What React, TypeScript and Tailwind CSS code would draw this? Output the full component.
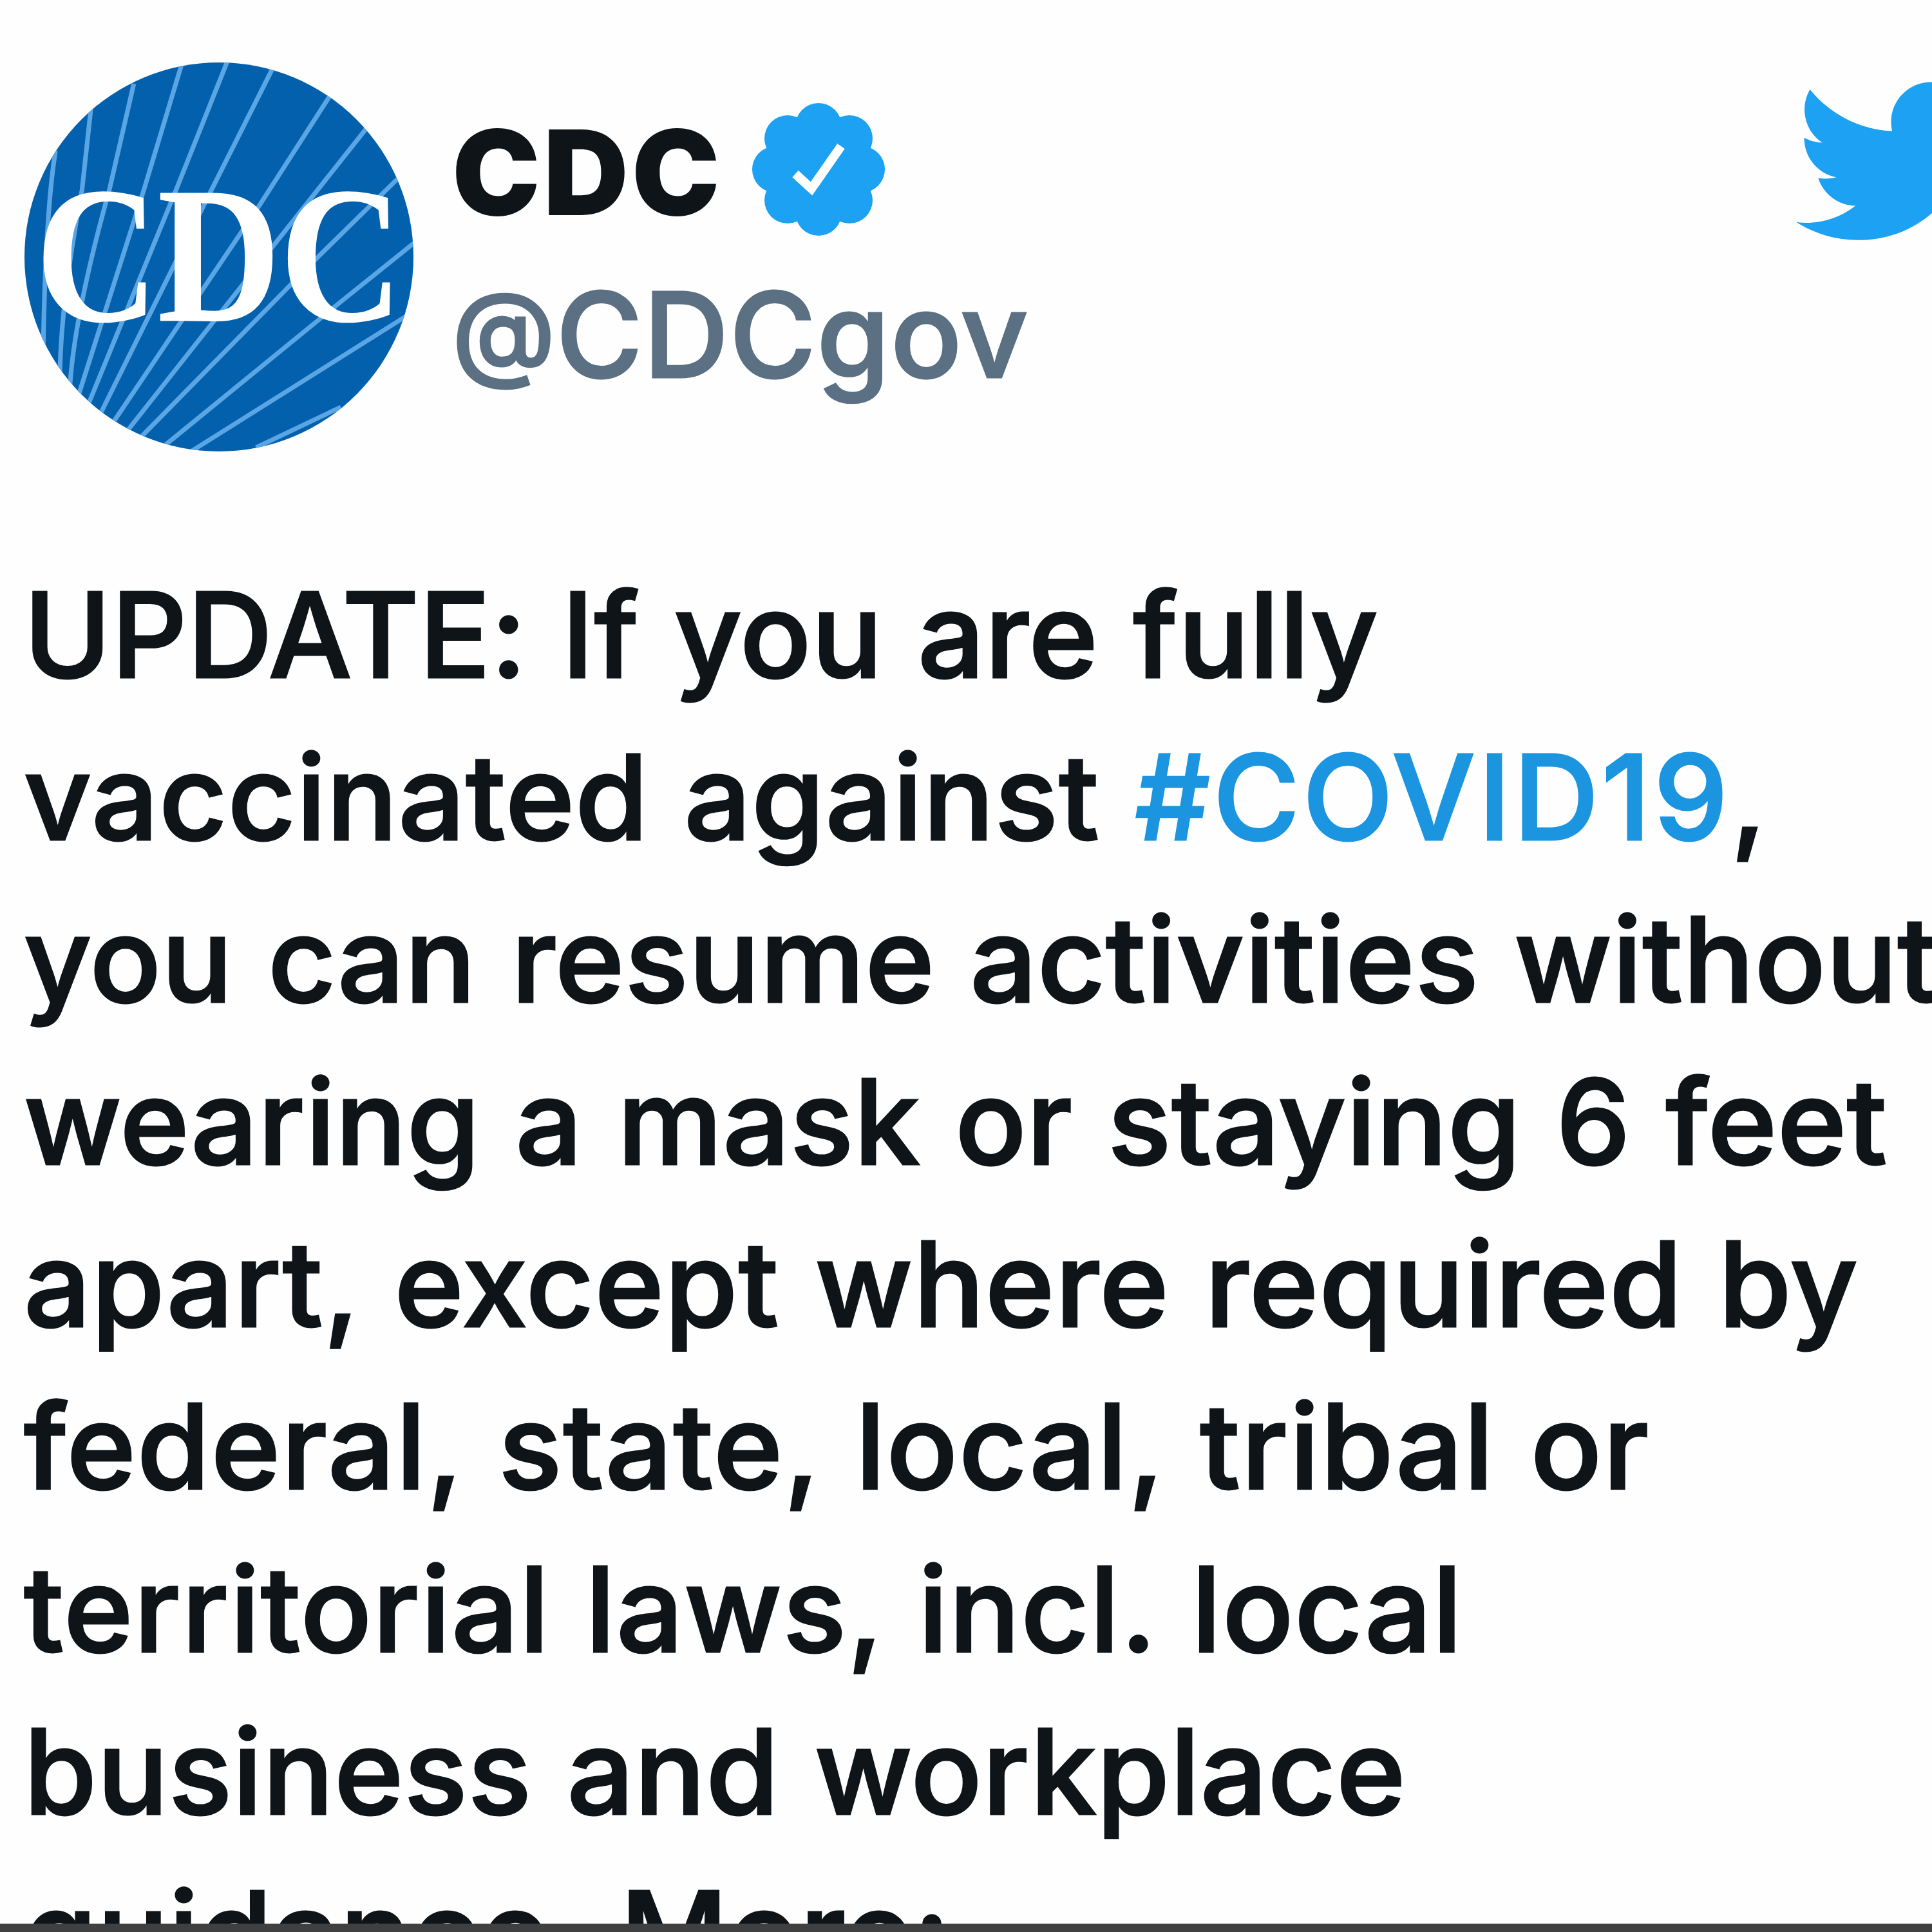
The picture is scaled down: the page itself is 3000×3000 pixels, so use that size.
const RAYS = [
  'M193 400Q158 620 150 1120',
  'M318 230L285 540Q210 950 208 1210',
  'M465 160L380 540Q255 1000 242 1260',
  'M636 75L500 540L265 1300',
  'M796 65L612 540L290 1350',
  'M955 90L735 540L335 1370',
  'M1155 190L905 590L375 1400',
  'M1285 305L950 740L425 1425',
  'M1395 487L1110 775L475 1440',
  'M1445 725L1185 940L560 1465',
  'M1410 993L650 1485',
  'M1185 1317L890 1462',
];

// scallops of the verified badge sit every 45 degrees
const SCALLOPS = [
  [0, -67],
  [48, -48],
  [67, 0],
  [48, 48],
  [0, 67],
  [-48, 48],
  [-67, 0],
  [-48, -48],
];

function Avatar() {
  return (
    <svg viewBox="85 84 1352 1392" preserveAspectRatio="none" className="w-[604px] h-[604px] shrink-0">
      <defs>
        <clipPath id="avatar">
          <ellipse cx="761" cy="780" rx="676" ry="696" />
        </clipPath>
      </defs>
      <g clipPath="url(#avatar)">
        <rect x="85" y="84" width="1352" height="1392" fill="#0360ad" />
        {RAYS.map((d) => (
          <path key={d} d={d} fill="none" stroke="#5aa5e4" strokeWidth="16" />
        ))}
      </g>
      <text
        transform="translate(122 1009) scale(.85 1)"
        fill="#fff"
        fontFamily="'Liberation Serif', serif"
        fontWeight="700"
        fontSize="700"
        letterSpacing="-6"
      >
        CDC
      </text>
    </svg>
  );
}

function VerifiedBadge() {
  return (
    <svg viewBox="-104 -104 208 208" className="w-[208px] h-[208px] mb-[10px] shrink-0">
      <g fill="#1da1f2">
        <circle r="85" />
        {SCALLOPS.map(([cx, cy]) => (
          <circle key={`${cx},${cy}`} cx={cx} cy={cy} r="36" />
        ))}
      </g>
      <path d="M-36 7L-11 30L35 -36" fill="none" stroke="#fff" strokeWidth="14" />
    </svg>
  );
}

function TwitterLogo() {
  return (
    <svg viewBox="0 0 24 24" fill="#1da1f2" className="w-[319px] h-[319px] shrink-0">
      <path d="M23.643 4.937c-.835.37-1.732.62-2.675.733.962-.576 1.7-1.49 2.048-2.578-.9.534-1.897.922-2.958 1.13-.85-.904-2.06-1.47-3.4-1.47-2.572 0-4.658 2.086-4.658 4.66 0 .364.042.718.12 1.06-3.873-.195-7.304-2.05-9.602-4.868-.4.69-.63 1.49-.63 2.342 0 1.616.823 3.043 2.072 3.878-.764-.025-1.482-.234-2.11-.583v.06c0 2.257 1.605 4.14 3.737 4.568-.392.106-.803.162-1.227.162-.3 0-.593-.028-.877-.082.593 1.85 2.313 3.198 4.352 3.234-1.595 1.25-3.604 1.995-5.786 1.995-.376 0-.747-.022-1.112-.065 2.062 1.323 4.51 2.093 7.14 2.093 8.57 0 13.255-7.098 13.255-13.254 0-.2-.005-.402-.014-.602.91-.658 1.7-1.477 2.323-2.41z" />
    </svg>
  );
}

export default function App() {
  return (
    <div className="flex flex-col w-[3000px] h-[3000px] overflow-hidden bg-[#fefefe] font-['Inter',sans-serif] text-[#0f1419]">
      <header className="flex items-start h-[860px] pl-[38px] pt-[91px] shrink-0">
        <div className="flex items-start w-[2739px] shrink-0 pt-[6px]">
          <Avatar />
          <div className="pl-[60px] pt-[45px]">
            <div className="flex items-center gap-[44px] h-[252px]">
              <span className="text-[183px] leading-[252px] font-black tracking-[5px]">CDC</span>
              <VerifiedBadge />
            </div>
            <div className="text-[183px] leading-[252px] font-medium tracking-[1.4px] text-[#5b7083] [-webkit-text-stroke:3px]">
              <span className="text-[163px] leading-[1px] align-[14px]">@</span>CDCgov
            </div>
          </div>
        </div>
        <TwitterLogo />
      </header>
      <main className="flex-1 min-h-0 overflow-hidden pl-[37px] text-[183px] leading-[252.1px] font-medium whitespace-nowrap [word-spacing:5px] [-webkit-text-stroke:3px]">
        <p className="tracking-[0.5px]">UPDATE: If you are fully</p>
        <p className="tracking-[1px]">
          vaccinated against <a className="tracking-[4.7px] text-[#1b95e0]">#COVID19</a>,
        </p>
        <p className="tracking-[0.7px]">you can resume activities without</p>
        <p className="tracking-[0.6px]">wearing a mask or staying 6 feet</p>
        <p className="tracking-[1.3px]">apart, except where required by</p>
        <p className="tracking-[1.9px]">federal, state, local, tribal or</p>
        <p className="tracking-[1.5px]">territorial laws, incl. local</p>
        <p className="tracking-[0.8px]">business and workplace</p>
        <p className="tracking-[0.9px]">guidance. More:</p>
      </main>
      <footer className="h-[13px] shrink-0 bg-[#404040]" />
    </div>
  );
}
